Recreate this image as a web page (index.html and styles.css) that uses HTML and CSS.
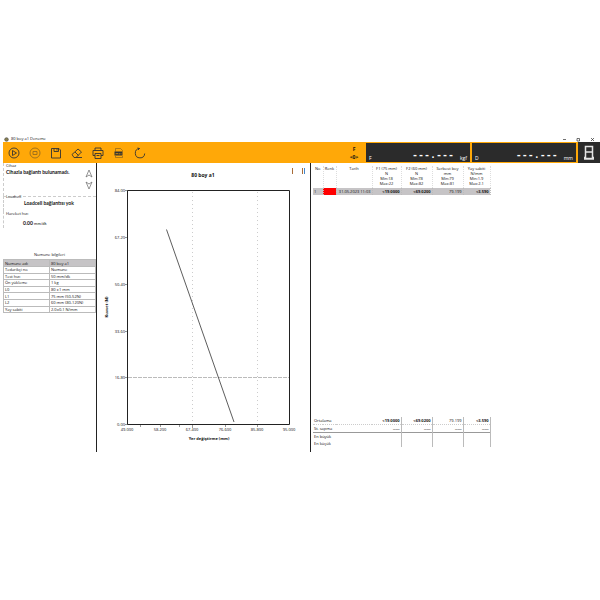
FILE: index.html
```
<!DOCTYPE html>
<html lang="tr">
<head>
<meta charset="utf-8">
<title>80 boy a1 Deneme</title>
<link rel="stylesheet" href="styles.css">
</head>
<body>
<div class="app">
	<header class="titlebar">
		<svg class="logo" viewBox="0 0 6 6"><circle cx="3" cy="3" r="2.2" fill="#8a8050" stroke="#444" /></svg>
		<h1>80 boy a1 Deneme</h1>
		<button aria-label="Küçült"><svg viewBox="0 0 5 5"><path d="M1 2.500h3" /></svg></button>
		<button aria-label="Büyüt"><svg viewBox="0 0 5 5"><path d="M1 1.5h2.5v2.5h-2.5z" /></svg></button>
		<button aria-label="Kapat"><svg viewBox="0 0 5 5"><path d="M1 1l3 3M4 1l-3 3" /></svg></button>
	</header>
	<div class="toolbar">
		<nav class="tools">
			<button aria-label="Başlat"><svg viewBox="0 0 12 12"><circle cx="6" cy="6" r="5" /><path d="M4.5 3.5v5l4-2.5z" /></svg></button>
			<button aria-label="Durdur" class="off"><svg viewBox="0 0 12 12"><circle cx="6" cy="6" r="5" /><path d="M4 4.5h4v3h-4z" /></svg></button>
			<button aria-label="Kaydet"><svg viewBox="0 0 12 12"><path d="M1.5 1.500h7.500l1.500 1.500v8h-9zM4 1.500v3h4.500v-3M7 2v1.500" /></svg></button>
			<button aria-label="Sil"><svg viewBox="0 0 12 12"><path d="M1 7.500l6-5.500 3.500 3-5.500 5.500h-2zM4 5l3.500 3.500M5 10.500h6" /></svg></button>
			<button aria-label="Yazdır"><svg viewBox="0 0 12 12"><path d="M3 3.500v-2.500h6v2.500M3 8.500h-2v-5h10v5h-2M3 6.500h6v5h-6zM4.500 8.500h3" /></svg></button>
			<button aria-label="Dışa aktar"><svg viewBox="0 0 12 12"><path class="thin" d="M2.500 4.500v-3h5l2 2v1M2.500 9v1.500h7v-1.500" /><path class="solid" d="M1.500 4.500h8v4h-8z" /><path class="mark" d="M3 7.500v-1.500l1 1 1-1v1.500M6.500 6v1.500M8 6v1.500" /></svg></button>
			<button aria-label="Yenile"><svg viewBox="0 0 12 12"><path d="M5.500 1.500a4.700 4.700 0 1 0 5.200 5M5.500 1.500l-2-.5M5.500 1.500l-1.500 1.500" /></svg></button>
		</nav>
		<div class="zero"><span>F</span><button>&lt;0&gt;</button></div>
		<div class="readout"><span>F</span><output>---.---</output><span>kgf</span></div>
		<div class="readout"><span>D</span><output>---.---</output><span>mm</span></div>
		<div class="device"><svg viewBox="0 0 12 16"><path d="M2.500 1.500h7v12h-7zM3 7h6M1 14h10M1 12.500h2M9 12.500h2" /></svg></div>
	</div>
	<main>
		<aside>
			<section class="box device-box">
				<h2>Cihaz</h2>
				<p>Cihazla bağlantı bulunamadı.</p>
				<div class="jog">
					<button aria-label="Yukarı"><svg viewBox="0 0 8 9"><path d="M4 1l3 7-3-2-3 2z" /></svg></button>
					<button aria-label="Aşağı"><svg viewBox="0 0 8 9"><path d="M4 8l3-7-3 2-3-2z" /></svg></button>
				</div>
			</section>
			<section class="box cell-box">
				<h2>Loadcell</h2>
				<p>Loadcell bağlantısı yok</p>
			</section>
			<section class="box speed-box">
				<h2>Hareket hızı</h2>
				<p>0.00 <small>mm/dk</small></p>
			</section>
			<table class="info">
				<caption>Numune bilgileri</caption>
				<tr class="selected"><td>Numune adı</td><td>80 boy a1</td></tr>
				<tr><td>Tedarikçi no</td><td>Numune</td></tr>
				<tr><td>Test hızı</td><td>50 mm/dk</td></tr>
				<tr><td>Ön yükleme</td><td>1 kg</td></tr>
				<tr><td>L0</td><td>80 ±1 mm</td></tr>
				<tr><td>L1</td><td>75 mm (50-52N)</td></tr>
				<tr><td>L2</td><td>60 mm (80-120N)</td></tr>
				<tr><td>Yay sabiti</td><td>2.0±0.1 N/mm</td></tr>
			</table>
		</aside>
		<section class="chart">
			<svg viewBox="0 0 213 288">
				<path class="brown" d="M195.500 4v6" /><path class="brown" d="M205.500 4v6" /><path class="blue" d="M207.500 4v6" />
				<text class="name" x="106" y="13">80 boy a1</text>
				<path class="dots" d="M95.500 28v232M160.500 28v232" />
				<path class="dash" d="M31 213.500h161" />
				<path class="tick" d="M28 26.500h3M28 73.500h3M28 120.500h3M28 167.500h3M28 213.500h3M28 260.500h3M63.500 261v2M95.500 261v3M128.500 261v2M160.500 261v2M82.500 261v2M43.500 261v2" />
				<path class="frame" d="M30.500 260.500v-234h162v234z" />
				<path class="curve" d="M69.500 65.500L137 258" />
				<g class="ylabels">
					<text x="28" y="28">84.00</text>
					<text x="28" y="75">67.20</text>
					<text x="28" y="122">50.40</text>
					<text x="28" y="169">33.60</text>
					<text x="28" y="215">16.80</text>
					<text x="28" y="262">0.00</text>
				</g>
				<g class="xlabels">
					<text x="30" y="267">49.000</text>
					<text x="63" y="267">58.200</text>
					<text x="95" y="267">67.400</text>
					<text x="128" y="267">76.600</text>
					<text x="160" y="267">85.800</text>
					<text x="192" y="267">95.000</text>
				</g>
				<text class="axis" x="112" y="276">Yer değiştirme (mm)</text>
				<text class="axis" transform="translate(11 143) rotate(-90)">Kuvvet (N)</text>
			</svg>
		</section>
		<section class="results">
			<table class="tests">
				<colgroup><col class="no"><col class="color"><col class="date"><col class="f1"><col class="f2"><col class="len"><col class="rate"></colgroup>
				<thead>
					<tr>
						<th>No</th><th>Renk</th><th>Tarih</th>
						<th>F1 (75 mm)<br>N<br>Min:18<br>Max:22</th>
						<th>F2 (60 mm)<br>N<br>Min:78<br>Max:82</th>
						<th>Serbest boy<br>mm<br>Min:79<br>Max:81</th>
						<th>Yay sabiti<br>N/mm<br>Min:1.9<br>Max:2.1</th>
					</tr>
				</thead>
				<tbody>
					<tr class="selected"><td>1</td><td class="swatch"></td><td>31.05.2023 11:03</td><td class="bad">&lt;19.0000</td><td class="bad">&lt;69.0200</td><td>79.199</td><td class="bad">&lt;3.590</td></tr>
				</tbody>
			</table>
			<table class="tests stats">
				<colgroup><col class="no"><col class="color"><col class="date"><col class="f1"><col class="f2"><col class="len"><col class="rate"></colgroup>
				<tr class="first"><th colspan="3">Ortalama</th><td class="bad">&lt;19.0000</td><td class="bad">&lt;69.0200</td><td>79.199</td><td class="bad">&lt;3.590</td></tr>
				<tr class="last"><th colspan="3">St. sapma</th><td class="bad">-----</td><td class="bad">-----</td><td class="bad">-----</td><td class="bad">-----</td></tr>
				<tr><th colspan="3">En büyük</th><td></td><td></td><td></td><td></td></tr>
				<tr><th colspan="3">En küçük</th><td></td><td></td><td></td><td></td></tr>
			</table>
		</section>
	</main>
</div>
</body>
</html>
```
FILE: styles.css
```
body
{
	margin: 0;
	min-height: 100vh;
	display: flex;
	align-items: center;
	background: #fff;
	color: #111;
	font: 4px/6px "Open Sans", "Noto Sans", sans-serif;
}
h1, h2, p
{
	margin: 0;
	font-size: 4px;
	font-weight: normal;
}
button
{
	padding: 0;
	border: 0;
	background: none;
	color: inherit;
	font: inherit;
}
svg
{
	display: block;
	fill: none;
	stroke: #333;
}
.app
{
	width: 100%;
	aspect-ratio: 16 / 9;
	box-sizing: border-box;
	padding-top: 5px;
	display: flex;
	flex-direction: column;
}
.titlebar
{
	height: 6px;
	padding: 0 5px 0 4px;
	display: flex;
	align-items: center;
	gap: 9px;
}
.titlebar h1
{
	flex: 1;
	margin-left: -7px;
}
.titlebar svg
{
	width: 5px;
	height: 5px;
	stroke-width: 0.7;
}
.toolbar
{
	height: 21px;
	margin-left: 3px;
	display: flex;
	align-items: stretch;
	gap: 2px;
	background: #ffa808;
}
.tools
{
	flex: 1;
	display: flex;
	align-items: center;
	gap: 9px;
	padding-left: 5px;
}
.tools svg
{
	width: 12px;
	height: 12px;
	stroke-width: 0.9;
}
.tools .off
{
	opacity: 0.5;
}
.tools .thin
{
	stroke-width: 0.4;
}
.tools .solid
{
	fill: #333;
	stroke: none;
}
.tools .mark
{
	stroke: #ffa808;
	stroke-width: 0.5;
}
.zero
{
	width: 20px;
	display: flex;
	flex-direction: column;
	justify-content: center;
	align-items: center;
	gap: 2px;
	font-size: 5px;
	font-weight: bold;
}
.readout
{
	width: 104px;
	box-sizing: border-box;
	margin: 1px 0;
	padding: 0 3px 1px;
	display: flex;
	align-items: flex-end;
	gap: 6px;
	background: #2b2b2b;
	color: #fff;
	font-size: 5px;
}
.readout output
{
	flex: 1;
	text-align: right;
	font: bold 10px/10px "Liberation Mono", monospace;
}
.device
{
	width: 22px;
	display: flex;
	align-items: center;
	justify-content: center;
	background: #2b2b2b;
}
.device svg
{
	width: 12px;
	height: 16px;
	stroke: #e4e4e4;
	stroke-width: 1.5;
}
main
{
	height: 289px;
	display: grid;
	grid-template-columns: 97fr 214fr 289fr;
}
aside
{
	padding-left: 3px;
	border-right: 1px solid #222;
}
.box
{
	position: relative;
	border-left: 1px dashed #ccc;
	padding-left: 2px;
}
.box p
{
	font: bold 5px/7px Lato, sans-serif;
}
.device-box
{
	height: 33px;
}
.jog
{
	position: absolute;
	top: 6px;
	right: 3px;
	display: grid;
	gap: 3px;
}
.jog svg
{
	width: 8px;
	height: 9px;
	stroke: #666;
	stroke-width: 0.7;
}
.cell-box
{
	height: 14px;
	border-top: 1px dashed #ccc;
}
.cell-box h2
{
	margin-top: -3px;
}
.cell-box p
{
	padding-left: 18px;
}
.speed-box
{
	height: 17px;
}
.speed-box p
{
	padding: 3px 0 0 17px;
}
.speed-box small
{
	font-size: 4px;
	font-weight: normal;
}
table
{
	border-collapse: collapse;
	table-layout: fixed;
}
td, th
{
	padding: 0 1px;
	white-space: nowrap;
	font-weight: normal;
}
.info
{
	width: 100%;
	height: 54px;
	margin-top: 24px;
	line-height: 5px;
}
.info caption
{
	padding-bottom: 2px;
}
.info td
{
	border: 1px solid #bbb;
}
.selected
{
	background: #c6c4c6;
}
.chart
{
	padding-top: 1px;
	border-right: 1px solid #222;
}
.chart svg
{
	width: 100%;
}
.chart text
{
	fill: #111;
	stroke: none;
	text-anchor: middle;
}
.chart .name
{
	font-size: 5px;
	font-weight: bold;
}
.chart .axis
{
	font-weight: bold;
}
.chart .ylabels text
{
	text-anchor: end;
}
.frame
{
	stroke: #222;
}
.tick
{
	stroke: #999;
}
.dots
{
	stroke: #ccc;
	stroke-dasharray: 1 3;
}
.dash
{
	stroke: #bbb;
	stroke-dasharray: 4 1;
}
.curve
{
	stroke-width: 0.8;
}
.brown
{
	stroke: #a86c38;
}
.blue
{
	stroke: #48c;
}
.results
{
	padding: 3px 0 5px 2px;
	display: flex;
	flex-direction: column;
	justify-content: space-between;
}
.tests
{
	width: 177px;
}
.no
{
	width: 10px;
}
.color
{
	width: 13px;
}
.date
{
	width: 36px;
}
.f1
{
	width: 29px;
}
.f2, .len
{
	width: 31px;
}
.rate
{
	width: 27px;
}
.tests th
{
	border-right: 1px dotted #ddd;
	line-height: 5px;
	padding-bottom: 2px;
	vertical-align: top;
}
.tests td
{
	height: 7px;
	line-height: 5px;
	border-right: 1px dotted #bbb;
	text-align: right;
}
.tests td:first-child
{
	text-align: left;
}
.tests .bad
{
	font-weight: bold;
}
.tests .swatch
{
	background: #f00;
}
.stats th
{
	padding-bottom: 0;
	border-right: 0;
	text-align: left;
	vertical-align: middle;
}
.stats td
{
	border-right: 1px solid #bbb;
}
.stats .first
{
	border-bottom: 1px dotted #ccc;
}
.stats .last
{
	border-bottom: 1px solid #999;
}
```
